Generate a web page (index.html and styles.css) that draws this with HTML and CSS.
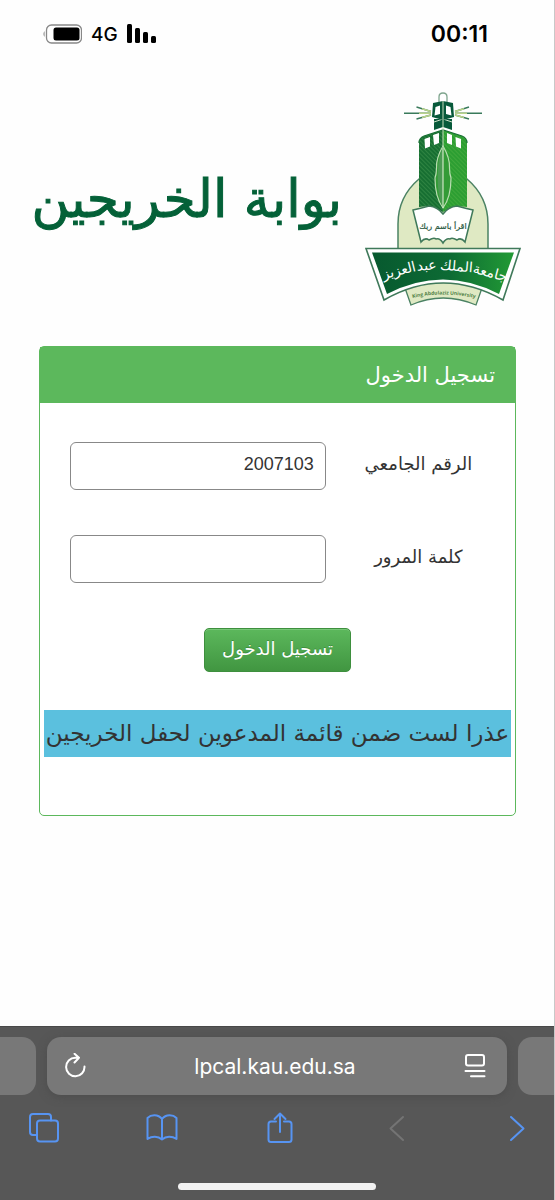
FILE: index.html
```html
<!DOCTYPE html>
<html lang="ar" dir="rtl">
<head>
<meta charset="utf-8">
<meta name="viewport" content="width=device-width, initial-scale=1">
<title>بوابة الخريجين</title>
<link rel="stylesheet" href="styles.css">
</head>
<body>
<div class="status-bar" dir="ltr">
  <div class="status-left">
    <svg class="battery" width="40" height="20" viewBox="0 0 40 20" aria-hidden="true">
      <path d="M2.500 7Q.5 10 2.500 13z" fill="#777"/>
      <rect x="4.500" y="1" width="35" height="18" rx="5" fill="#fff" stroke="#888" stroke-width="1.300"/>
      <rect x="11.500" y="3.500" width="26" height="13" rx="2.500" fill="#000"/>
    </svg>
    <span class="network">4G</span>
    <svg class="signal" width="30" height="20" viewBox="0 0 30 20" aria-hidden="true">
      <rect x="0" y="0" width="5" height="19" rx="1.500"/>
      <rect x="8" y="4" width="5" height="15" rx="1.500"/>
      <rect x="16" y="8" width="5" height="11" rx="1.500"/>
      <rect x="24" y="12" width="5" height="7" rx="1.500"/>
    </svg>
  </div>
  <time class="clock">00:11</time>
</div>

<header class="brand">
  <svg class="crest" viewBox="362 88 162 222" role="img" aria-label="King Abdulaziz University">
    <defs>
      <linearGradient id="band" x1="0" x2="1">
        <stop offset="0" stop-color="#07592f"/><stop offset=".55" stop-color="#0d6b34"/><stop offset="1" stop-color="#229a35"/>
      </linearGradient>
      <pattern id="hatchDark" width="3" height="3" patternUnits="userSpaceOnUse" patternTransform="rotate(45)">
        <rect width="3" height="3" fill="#176f32"/><rect width="3" height="1" fill="#2f8442"/>
      </pattern>
      <pattern id="hatchLight" width="3" height="3" patternUnits="userSpaceOnUse" patternTransform="rotate(45)">
        <rect width="3" height="3" fill="#2c9e32"/><rect width="3" height="1" fill="#40a83c"/>
      </pattern>
      <path id="ribbonLine" d="M409 299Q443 290 479 299"/>
    </defs>
    <path d="M398 249V224C398 206 406 190 419 179H467C480 190 488 206 488 224V249z" fill="#dfe9c3" stroke="#4b8263" stroke-width="1.500"/>
    <path d="M443 130L424 136Q419 138 419 143V207L430 206L443 212z" fill="url(#hatchDark)"/>
    <path d="M443 130L462 136Q467 138 467 143V207L456 206L443 212z" fill="url(#hatchLight)"/>
    <path d="M467 143Q467 138 462 136L443 130L424 136Q419 138 419 143" fill="none" stroke="#176f32" stroke-width="1.200"/>
    <path d="M434 119H452V130L443 127L434 130z" fill="#07593a"/>
    <path d="M434 122L443 119L452 122" fill="none" stroke="#cfe0c8" stroke-width="1"/>
    <path d="M439 103V97Q439 93 443 93Q447 93 447 97V103" fill="#fff" stroke="#7fa58e" stroke-width="1.300"/>
    <path d="M433 103L443 101L453 103L454 117L443 120L432 117z" fill="#07593a"/>
    <path d="M435.500 107L440 105.500V114L434.500 115.500zM446 105.500L450.500 107L451.500 115.500L446 114z" fill="#fff"/>
    <path d="M443 101V147" stroke="#c6ddbb" stroke-width="1"/>
    <path d="M431 113.200H404M431 111.500L416.500 107M431 115L416.500 119M455 113.200H482M455 111.500L469 107M455 115L469 119" stroke="#397a5b" stroke-width="1.400"/>
    <path d="M431 113.200H419M431 111.500L422 108.700M431 115L422 117.500M455 113.200H467M455 111.500L464 108.700M455 115L464 117.500" stroke="#b9d28a" stroke-width="1.500"/>
    <path d="M424.500 139L430 137V146.500L425 148.500zM433 135L439 133V143L434 145zM447 133L452 135V145L447 143zM455.500 137L461 139V148.500L456 146.500z" fill="#fff"/>
    <path d="M443 146Q436 158 436.500 168Q436.500 174 435 178C435 190 437 200 443 208C449 200 451 190 451 178Q449.500 174 449.500 168Q450 158 443 146z" fill="#339b36" stroke="#b9ddb1" stroke-width="1.200"/>
    <path d="M443 147Q438 158 438 170C437 188 439 200 443 207z" fill="#4c9b54"/>
    <path d="M443 148V208" stroke="#cfe6c5" stroke-width="1.200"/>
    <path d="M413 210Q422 208 429 206Q438 207 443 214Q448 207 457 206Q464 208 473 210L465 242Q461 237 457 240Q452 237 450 239Q446 238 443 243Q440 238 436 239Q434 237 429 240Q425 237 421 242z" fill="#fff" stroke="#3f795a" stroke-width="1.500"/>
    <text class="crest-book" x="443" y="229" text-anchor="middle">اقرأ باسم ربك</text>
    <path d="M405 288Q443 272 482 288L476 305Q443 291 411 305z" fill="#dfe9c3" stroke="#4b8263" stroke-width="1.300"/>
    <path d="M366 248.500H520L503 300Q443 266 384 300z" fill="#fff" stroke="#3f795a" stroke-width="1.600"/>
    <path d="M372 252.500H514L499 294Q443 265 387 294z" fill="url(#band)"/>
    <g class="crest-name" text-anchor="middle">
      <text transform="translate(489 277) rotate(15)">جامعة</text>
      <text transform="translate(456 271) rotate(5)">الملك</text>
      <text transform="translate(427 270) rotate(-4)">عبد</text>
      <text transform="translate(400 275) rotate(-14)">العزيز</text>
    </g>
    <text class="crest-english" direction="ltr"><textPath href="#ribbonLine" startOffset="50%" text-anchor="middle">King Abdulaziz University</textPath></text>
  </svg>
  <h1 class="brand-title">بوابة الخريجين</h1>
</header>

<main class="content">
  <section class="panel">
    <h2 class="panel-heading">تسجيل الدخول</h2>
    <form class="login">
      <div class="field">
        <label for="student-id">الرقم الجامعي</label>
        <input id="student-id" type="text" inputmode="numeric" value="2007103">
      </div>
      <div class="field">
        <label for="password">كلمة المرور</label>
        <input id="password" type="password">
      </div>
      <button class="submit" type="button">تسجيل الدخول</button>
      <p class="notice" role="alert">عذرا لست ضمن قائمة المدعوين لحفل الخريجين</p>
    </form>
  </section>
</main>

<footer class="browser" dir="ltr">
  <div class="tabs">
    <div class="tab-edge tab-edge-left"></div>
    <div class="address">
      <button class="icon-button" type="button" aria-label="Reload">
        <svg width="24" height="26" viewBox="0 0 24 26"><path d="M21.500 13.500A9.200 9.200 0 1 1 12.300 4.800H16M11.500 .8L16 4.800L11.500 9.500"/></svg>
      </button>
      <span class="url">lpcal.kau.edu.sa</span>
      <button class="icon-button" type="button" aria-label="Page menu">
        <svg width="24" height="26" viewBox="0 0 24 26"><rect x="3" y="2" width="18" height="10.500" rx="2"/><path d="M2.500 18H21.500M8 23.300H21.500"/></svg>
      </button>
    </div>
    <div class="tab-edge tab-edge-right"></div>
  </div>
  <nav class="toolbar">
    <button class="icon-button" type="button" aria-label="Tabs">
      <svg width="32" height="32" viewBox="0 0 32 32"><path d="M8.500 23H5A3 3 0 0 1 2 20V5A3 3 0 0 1 5 2H20A3 3 0 0 1 23 5V8.500"/><rect x="9" y="8.500" width="21" height="21" rx="3"/></svg>
    </button>
    <button class="icon-button" type="button" aria-label="Bookmarks">
      <svg width="32" height="32" viewBox="0 0 32 32"><path d="M16 7C12 2 5 2.500 1.500 6V27C6 24 12 24 16 27.500C20 24 26 24 30.500 27V6C27 2.500 20 2 16 7zM16 7V27.500"/></svg>
    </button>
    <button class="icon-button" type="button" aria-label="Share">
      <svg width="32" height="32" viewBox="0 0 32 32"><path d="M12 9.500H7A2.500 2.500 0 0 0 4.500 12V27.500A2.500 2.500 0 0 0 7 30H25A2.500 2.500 0 0 0 27.500 27.500V12A2.500 2.500 0 0 0 25 9.500H20M16 20V1.500M10.500 7L16 1.500L21.500 7"/></svg>
    </button>
    <button class="icon-button" type="button" aria-label="Back" disabled>
      <svg width="32" height="32" viewBox="0 0 32 32"><path d="M21 5L8.500 16.500L21 28"/></svg>
    </button>
    <button class="icon-button forward" type="button" aria-label="Forward">
      <svg width="32" height="32" viewBox="0 0 32 32"><path d="M11 5L23.500 16.500L11 28"/></svg>
    </button>
  </nav>
  <div class="home-indicator"></div>
</footer>
</body>
</html>
```

FILE: styles.css
```css
* {
  box-sizing: border-box;
}

body {
  margin: 0;
  min-height: 100vh;
  display: flex;
  flex-direction: column;
  background: #fefefe;
  border-right: 1px solid #c8c8c8;
  color: #333;
  font-family: "DejaVu Sans", sans-serif;
}

button {
  font-family: inherit;
  cursor: pointer;
}

/* Status bar */
.status-bar {
  display: flex;
  justify-content: space-between;
  align-items: center;
  height: 68px;
  padding: 0 66px 0 42px;
  color: #000;
  font-family: Inter, sans-serif;
}

.status-left {
  display: flex;
  align-items: center;
  gap: 9px;
}

.network {
  font-size: 19px;
  font-weight: 500;
}

.clock {
  font-size: 23px;
  font-weight: 600;
}

/* Brand */
.brand {
  display: flex;
  align-items: center;
  gap: 20px;
  padding: 20px 30px 36px 30px;
}

.crest {
  width: 162px;
  height: 222px;
  flex: none;
}

.crest-book {
  font: 8px "DejaVu Sans", sans-serif;
  fill: #28583e;
  stroke: #28583e;
  stroke-width: .2px;
}

.crest-name {
  font: 14px "DejaVu Sans", sans-serif;
  fill: #fff;
}

.crest-english {
  font: bold 5px "Open Sans", sans-serif;
  fill: #4f8145;
}

.brand-title {
  margin: 0;
  color: #046138;
  font-size: 52px;
  line-height: 80px;
  font-weight: 400;
  white-space: nowrap;
  -webkit-text-stroke: 1px #046138;
}

/* Login panel */
.content {
  flex: 1;
  padding: 0 38px 0 39px;
}

.panel {
  border: 1px solid #5cb85c;
  border-radius: 5px;
  background: #fff;
}

.panel-heading {
  margin: 0;
  padding: 0 20px;
  background: #5cb85c;
  color: #fff;
  font-size: 21px;
  font-weight: 400;
  line-height: 56px;
}

.login {
  display: flex;
  flex-direction: column;
  align-items: center;
  padding: 39px 4px 58px;
}

.field {
  align-self: stretch;
  display: grid;
  grid-template-columns: 42% 58%;
  align-items: center;
  margin-bottom: 45px;
  padding-left: 26px;
}

.field label {
  padding-bottom: 6px;
  text-align: center;
  font-size: 18px;
}

.field input {
  width: 100%;
  height: 48px;
  padding: 0 11px 4px;
  border: 1px solid #888;
  border-radius: 6px;
  background: #fff;
  color: #333;
  font-family: "Liberation Sans", Arial, sans-serif;
  font-size: 18px;
}

.submit {
  height: 44px;
  margin-bottom: 38px;
  padding: 0 17px 3px;
  border: 1px solid #3e8f3e;
  border-radius: 5px;
  background: linear-gradient(#5cb85c, #419641);
  box-shadow: inset 0 1px 0 #78c778;
  color: #fff;
  font-size: 18px;
  text-shadow: 0 -1px 0 #3e8f3e;
}

.notice {
  align-self: stretch;
  margin: 0;
  background: #5bc0de;
  font-size: 23px;
  line-height: 47px;
  text-align: center;
  white-space: nowrap;
}

/* Browser chrome */
.browser {
  background: #575757;
  border-top: 1px solid #484848;
  padding: 10px 0;
}

.tabs {
  display: flex;
  gap: 11px;
  height: 58px;
}

.tab-edge {
  width: 36px;
  background: #787878;
}

.tab-edge-left {
  border-radius: 0 14px 14px 0;
}

.tab-edge-right {
  border-radius: 14px 0 0 14px;
}

.address {
  flex: 1;
  display: flex;
  align-items: center;
  justify-content: space-between;
  padding: 0 20px 0 16px;
  border-radius: 14px;
  background: #787878;
  box-shadow: 0 2px 8px #4d4d4d;
  color: #fff;
}

.url {
  font-family: Inter, sans-serif;
  font-size: 21px;
}

.icon-button {
  display: flex;
  padding: 0;
  border: 0;
  background: none;
  color: inherit;
}

.icon-button svg {
  fill: none;
  stroke: currentColor;
  stroke-width: 2;
  stroke-linecap: round;
  stroke-linejoin: round;
}

.toolbar {
  display: flex;
  justify-content: space-between;
  padding: 17px 22px 39px 28px;
  color: #5794f2;
}

.toolbar .icon-button:disabled {
  color: #747474;
}

.home-indicator {
  width: 198px;
  height: 7px;
  margin: 0 auto;
  border-radius: 4px;
  background: #f2f2f2;
}
```
